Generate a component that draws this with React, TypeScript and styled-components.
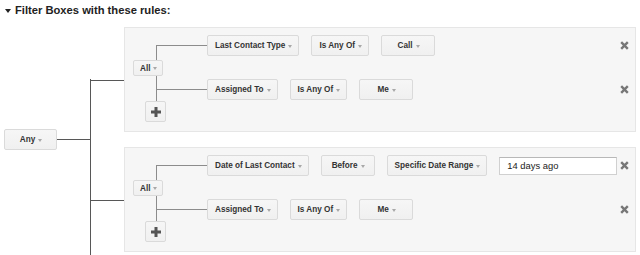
import React from "react";
import styled, { createGlobalStyle } from "styled-components";

const Global = createGlobalStyle`
  html, body { margin: 0; padding: 0; background: #fff; overflow: hidden; }
  body { font-family: "Liberation Sans", Arial, sans-serif; }
`;

const Page = styled.div`
  width: 640px;
  height: 255px;
  padding-left: 4px;
  box-sizing: border-box;
  overflow: hidden;
`;

const Header = styled.div`
  display: flex;
  align-items: center;
  gap: 4px;
  height: 14px;
  margin-top: 3px;
  padding-left: 1px;
  font-size: 11.2px;
  font-weight: bold;
  color: #222;
`;

const Caret = styled.span`
  width: 0;
  height: 0;
  border-left: 3.5px solid transparent;
  border-right: 3.5px solid transparent;
  border-top: 4px solid #222;
  margin-top: 1px;
`;

const Tree = styled.div`
  display: flex;
  align-items: center;
  margin-top: 10px;
`;

const Arrow = styled.span`
  width: 0;
  height: 0;
  border-left: 2.5px solid transparent;
  border-right: 2.5px solid transparent;
  border-top: 3px solid #a8a8a8;
  margin-left: 3px;
  margin-top: 1px;
`;

const Btn = styled.div<{ $h?: number }>`
  box-sizing: border-box;
  display: inline-flex;
  align-items: center;
  justify-content: center;
  height: ${(p) => p.$h ?? 21}px;
  min-width: 54px;
  padding: 0 6px 0 7px;
  border: 1px solid #dadada;
  border-radius: 2px;
  background: linear-gradient(#f6f6f6, #f0f0f0);
  color: #333;
  font-size: 8.2px;
  font-weight: bold;
  white-space: nowrap;
  flex: none;
`;

const AnyBtn = styled(Btn)`
  width: 53px;
  min-width: 0;
`;

const AnyLink = styled.div`
  width: 34px;
  height: 1px;
  background: #575757;
  flex: none;
`;

const Groups = styled.div`
  position: relative;
  display: flex;
  flex-direction: column;
  gap: 15px;
  width: 512px;
  margin-left: 33px;
  &::before {
    content: "";
    position: absolute;
    left: -34px;
    top: 52px;
    bottom: -3px;
    width: 1px;
    background: #575757;
  }
`;

const Panel = styled.div`
  position: relative;
  box-sizing: border-box;
  height: 105px;
  padding: 7px 6px 0 0;
  border: 1px solid #e6e6e6;
  background: #f6f6f6;
  &::before {
    content: "";
    position: absolute;
    left: -34px;
    top: 52px;
    width: 33px;
    height: 1px;
    background: #575757;
  }
`;

const Rules = styled.div`
  position: relative;
  display: flex;
  flex-direction: column;
  gap: 23px;
  margin-left: 31px;
  &::before {
    content: "";
    position: absolute;
    left: 0;
    top: 10px;
    bottom: 21px;
    width: 1px;
    background: #8c8c8c;
  }
`;

const AllBtn = styled(Btn)`
  position: absolute;
  left: -23px;
  top: 25px;
  min-width: 0;
  padding: 0 5px 0 6px;
`;

const Row = styled.div`
  position: relative;
  display: flex;
  align-items: center;
  height: 21px;
  padding-left: 51px;
  &::before {
    content: "";
    position: absolute;
    left: 0;
    top: 10px;
    width: 51px;
    height: 1px;
    background: #8c8c8c;
  }
`;

const Fields = styled.div`
  display: flex;
  align-items: center;
  gap: 12px;
`;

const Remove = styled.div`
  margin-left: auto;
  width: 10px;
  height: 10px;
  display: flex;
  align-items: center;
  justify-content: center;
`;

const TextInput = styled.div`
  box-sizing: border-box;
  width: 118px;
  height: 18px;
  display: flex;
  align-items: center;
  padding-left: 7px;
  background: #fff;
  border: 1px solid #d0d0d0;
  border-top-color: #b8b8b8;
  font-size: 9.4px;
  color: #222;
`;

const PlusBtn = styled(Btn)`
  width: 21px;
  min-width: 0;
  padding: 0;
  margin-left: -11px;
  margin-top: -22px;
  position: relative;
`;

type Field = { label: string; kind?: "input" };

const XIcon = () => (
  <svg width="9" height="9" viewBox="0 0 9 9">
    <path d="M1.2 1.2 L7.8 7.8 M7.8 1.2 L1.2 7.8" stroke="#777" strokeWidth="2.4" strokeLinecap="butt" />
  </svg>
);

const PlusIcon = () => (
  <svg width="10" height="10" viewBox="0 0 10 10">
    <rect x="3.5" y="0" width="3" height="10" fill="#555" />
    <rect x="0" y="3.5" width="10" height="3" fill="#555" />
  </svg>
);

const Group = ({ rows }: { rows: Field[][] }) => (
  <Panel>
    <Rules>
      <AllBtn $h={16}>
        All<Arrow />
      </AllBtn>
      {rows.map((fields, i) => (
        <Row key={i}>
          <Fields>
            {fields.map((f, j) =>
              f.kind === "input" ? (
                <TextInput key={j}>{f.label}</TextInput>
              ) : (
                <Btn key={j}>
                  {f.label}
                  <Arrow />
                </Btn>
              )
            )}
          </Fields>
          <Remove>
            <XIcon />
          </Remove>
        </Row>
      ))}
      <PlusBtn>
        <PlusIcon />
      </PlusBtn>
    </Rules>
  </Panel>
);

const groups: Field[][][] = [
  [
    [{ label: "Last Contact Type" }, { label: "Is Any Of" }, { label: "Call" }],
    [{ label: "Assigned To" }, { label: "Is Any Of" }, { label: "Me" }],
  ],
  [
    [
      { label: "Date of Last Contact" },
      { label: "Before" },
      { label: "Specific Date Range" },
      { label: "14 days ago", kind: "input" },
    ],
    [{ label: "Assigned To" }, { label: "Is Any Of" }, { label: "Me" }],
  ],
];

export default function App() {
  return (
    <Page>
      <Global />
      <Header>
        <Caret />
        Filter Boxes with these rules:
      </Header>
      <Tree>
        <AnyBtn>
          Any<Arrow />
        </AnyBtn>
        <AnyLink />
        <Groups>
          {groups.map((rows, i) => (
            <Group key={i} rows={rows} />
          ))}
        </Groups>
      </Tree>
    </Page>
  );
}
